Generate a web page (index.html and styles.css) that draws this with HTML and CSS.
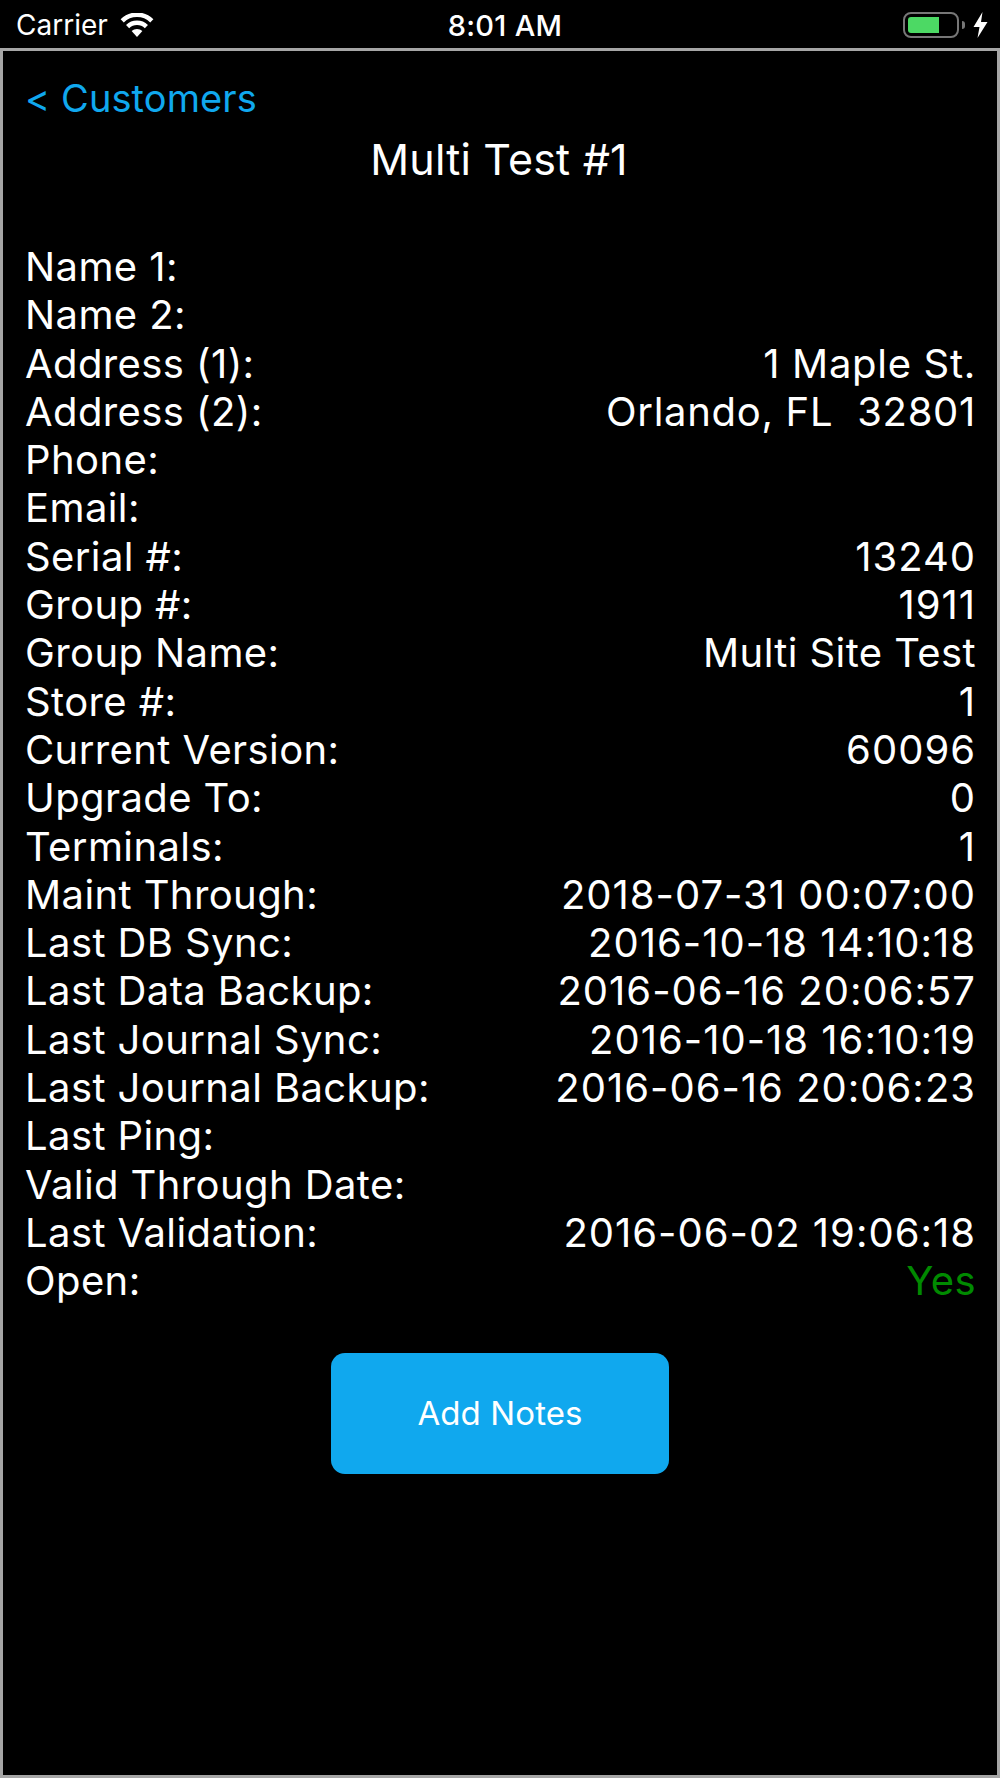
FILE: index.html
```html
<!DOCTYPE html>
<html lang="en">
<head>
    <meta charset="UTF-8">
    <meta name="viewport" content="width=device-width, initial-scale=1.0">
    <title>Multi Test #1</title>
    <link rel="stylesheet" href="styles.css">
</head>
<body>
    <div class="status-bar">
        <div class="status-left">
            <span class="carrier">Carrier</span>
            <svg class="wifi" width="34" height="24" viewBox="0 0 34 24">
                <path d="M17 24 L11.6 18 A8 8 0 0 1 22.4 18 Z" fill="#fff"/>
                <path d="M7.6 13.6 A13.5 13.5 0 0 1 26.4 13.6" fill="none" stroke="#fff" stroke-width="4.5"/>
                <path d="M2.2 7.8 A21 21 0 0 1 31.8 7.8" fill="none" stroke="#fff" stroke-width="4.5"/>
            </svg>
        </div>
        <span class="clock">8:01 AM</span>
        <div class="status-right">
            <div class="battery"><div class="battery-level"></div></div>
            <div class="battery-cap"></div>
            <svg class="bolt" width="15" height="26" viewBox="0 0 15 26">
                <path d="M9.5 0 L0.5 15 H6.5 L4.5 26 L14.5 10 H8 Z" fill="#fff"/>
            </svg>
        </div>
    </div>

    <div class="screen">
        <a class="back-link">&lt; Customers</a>
        <h1>Multi Test #1</h1>

        <div class="details">
            <div class="row"><span>Name 1:</span><span></span></div>
            <div class="row"><span>Name 2:</span><span></span></div>
            <div class="row"><span>Address (1):</span><span class="addr">1 Maple St.</span></div>
            <div class="row"><span>Address (2):</span><span class="addr">Orlando, FL  32801</span></div>
            <div class="row"><span>Phone:</span><span></span></div>
            <div class="row"><span>Email:</span><span></span></div>
            <div class="row"><span>Serial #:</span><span class="num">13240</span></div>
            <div class="row"><span>Group #:</span><span class="num">1911</span></div>
            <div class="row"><span>Group Name:</span><span>Multi Site Test</span></div>
            <div class="row"><span>Store #:</span><span class="num">1</span></div>
            <div class="row"><span>Current Version:</span><span class="num">60096</span></div>
            <div class="row"><span>Upgrade To:</span><span class="num">0</span></div>
            <div class="row"><span>Terminals:</span><span class="num">1</span></div>
            <div class="row"><span>Maint Through:</span><span class="num">2018-07-31 00:07:00</span></div>
            <div class="row"><span>Last DB Sync:</span><span class="num">2016-10-18 14:10:18</span></div>
            <div class="row"><span>Last Data Backup:</span><span class="num">2016-06-16 20:06:57</span></div>
            <div class="row"><span>Last Journal Sync:</span><span class="num">2016-10-18 16:10:19</span></div>
            <div class="row"><span>Last Journal Backup:</span><span class="num">2016-06-16 20:06:23</span></div>
            <div class="row"><span>Last Ping:</span><span></span></div>
            <div class="row"><span>Valid Through Date:</span><span></span></div>
            <div class="row"><span>Last Validation:</span><span class="num">2016-06-02 19:06:18</span></div>
            <div class="row"><span>Open:</span><span class="open-yes">Yes</span></div>
        </div>

        <button type="button" class="add-notes">Add Notes</button>
    </div>
</body>
</html>
```

FILE: styles.css
```css
body {
    font-family: Inter, Roboto, sans-serif;
    margin: 0;
    padding: 0;
    height: 1778px;
    display: flex;
    flex-direction: column;
    background-color: #000;
    color: #fff;
    overflow: hidden;
}

.status-bar {
    height: 48px;
    padding: 2px 12px 0 16px;
    display: grid;
    grid-template-columns: 1fr auto 1fr;
    align-items: center;
    flex-shrink: 0;
    box-sizing: border-box;
}

.status-left {
    display: flex;
    align-items: center;
    gap: 12px;
}

.carrier {
    font-size: 28px;
}

.clock {
    margin-left: 6px;
    font-size: 29px;
    font-weight: 500;
    letter-spacing: 0.3px;
}

.status-right {
    display: flex;
    align-items: center;
    justify-content: flex-end;
}

.battery {
    width: 56px;
    height: 26px;
    border: 2px solid #777;
    border-radius: 8px;
    padding: 3px;
    box-sizing: border-box;
}

.battery-level {
    width: 31px;
    height: 100%;
    background-color: #4cd964;
    border-radius: 3px 0 0 3px;
}

.battery-cap {
    width: 3px;
    height: 8px;
    margin-left: 3px;
    background-color: #777;
    border-radius: 0 3px 3px 0;
}

.bolt {
    margin-left: 8px;
}

.screen {
    flex: 1;
    border: 3px solid #a6a6a6;
    padding: 25px 21px 0 22px;
    display: flex;
    flex-direction: column;
}

.back-link {
    color: #10a8ee;
    font-size: 38px;
    line-height: 44px;
    letter-spacing: 0.1px;
}

h1 {
    font-size: 43px;
    font-weight: 400;
    line-height: 48px;
    letter-spacing: 0.2px;
    text-align: center;
    margin: 15px 3px 60px 0;
}

.row {
    display: flex;
    justify-content: space-between;
    font-size: 40px;
    letter-spacing: 0.4px;
    line-height: 48.3px;
    height: 48.3px;
}

.num {
    letter-spacing: 1px;
}

.addr {
    letter-spacing: 0.7px;
    white-space: pre;
}

.open-yes {
    color: #008a00;
}

.add-notes {
    align-self: center;
    width: 338px;
    height: 121px;
    margin: 47px 1px 0 0;
    background-color: #10a8ee;
    color: #fff;
    border: none;
    border-radius: 14px;
    font-family: inherit;
    font-size: 33px;
    letter-spacing: 0.1px;
}
```
